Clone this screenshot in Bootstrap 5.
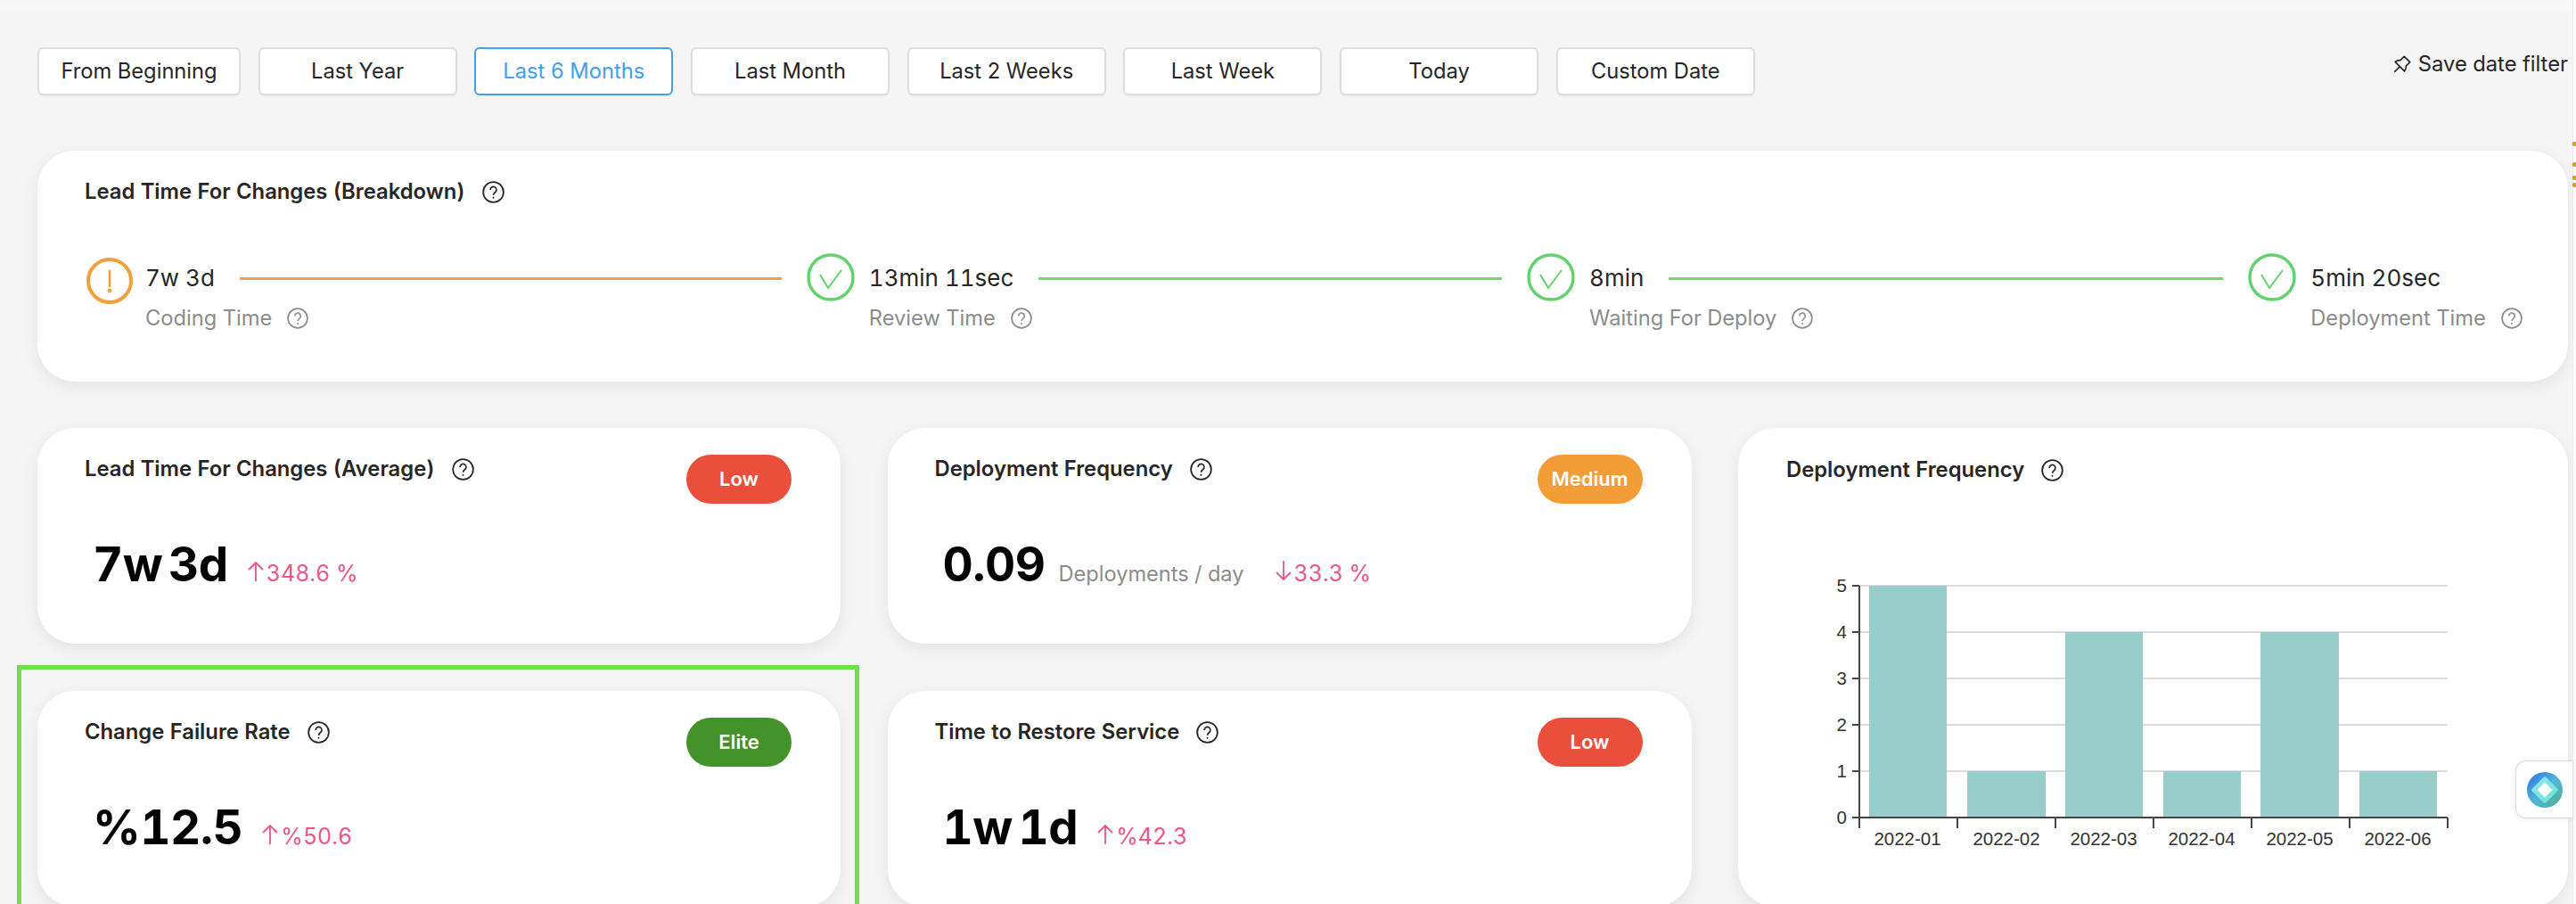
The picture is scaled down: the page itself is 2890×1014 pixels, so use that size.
<!DOCTYPE html>
<html lang="en">
<head>
  <meta charset="UTF-8">
  <meta name="viewport" content="width=device-width, initial-scale=1">
  <title>DORA Metrics</title>

  <link href="https://cdn.jsdelivr.net/npm/bootstrap@5.3.3/dist/css/bootstrap.min.css" rel="stylesheet">

  <style>
    html, body { height: 100%; overflow: hidden; }
    body {
      background: #f5f5f5;
      color: #262626;
      font-family: Inter, "Liberation Sans", sans-serif;
      font-size: 24px;
      font-variant-numeric: tabular-nums;
    }
    .page-wrap { padding: 41px 9px 0 42px; border-top: 12px solid #f7f7f7; }

    /* date filter */
    .date-bar { margin-bottom: 62px; }
    .date-btn {
      width: 223.2px;
      height: 54px;
      padding: 0;
      background: #fff;
      border: 2px solid #dedede;
      border-radius: 6px;
      color: #262626;
      font-size: 23.7px;
      box-shadow: 0 1px 2px rgba(0,0,0,.04);
    }
    .date-btn.first-btn { width: 228px; }
    .date-btn.is-on { border-color: #40a0f5; color: #40a0f5; }
    .date-list { gap: 19.5px; }
    .save-filter { margin-top: 4px; line-height: 30px; font-size: 23.8px; gap: 7px; }
    .save-filter svg { width: 22px; height: 24px; }

    /* cards */
    .panel-card {
      background: #fff;
      border: 0;
      border-radius: 42px;
      box-shadow: 0 5px 18px rgba(0,0,0,.08);
    }
    .panel-title { font-size: 23.8px; font-weight: 600; line-height: 32px; gap: 19px; }
    .help-ic { width: 25px; height: 25px; flex: none; }
    .sub-text .help-ic { width: 24px; height: 24px; }

    /* breakdown */
    .breakdown { height: 259px; padding: 30px 143px 0 53px; }
    .step-row { margin-top: 53px; }
    .step-ic { width: 54px; height: 54px; flex: none; margin-right: 16px; }
    .step-ic.warn { height: 60px; margin: 0 13px 0 1px; }
    .step-val { font-size: 26px; line-height: 36px; margin-top: 10px; white-space: nowrap; }
    .sub-text {
      width: 0;
      margin-top: 11px;
      font-size: 23.7px;
      line-height: 32px;
      color: #8c8c8c;
      white-space: nowrap;
      gap: 17px;
    }
    .seg { height: 3px; margin: 27px 28px 0; flex-basis: 0; }
    .seg-orange { background: #f2a04a; }
    .seg-green { background: #6fd877; }
    .seg-a { flex-grow: 607; }
    .seg-b { flex-grow: 519; }
    .seg-c { flex-grow: 621; }

    /* metric cards */
    .metric-grid {
      display: grid;
      grid-template-columns: 901fr 902fr 931fr;
      grid-template-rows: 242px 242px;
      column-gap: 52.5px;
      row-gap: 53px;
      margin-top: 52px;
    }
    .metric-body { padding: 30px 55px 0 53px; }
    .level-pill {
      width: 118px;
      height: 55px;
      border-radius: 28px;
      font-size: 22px;
      font-weight: 600;
      line-height: 55px;
      padding: 0;
    }
    .level-low { background: #e94f3b; }
    .level-mid { background: #f29d38; }
    .level-elite { background: #43922a; }
    .metric-row { margin-top: 38px; padding-left: 9px; }
    .big-num {
      font-size: 53px;
      font-weight: 700;
      line-height: 60px;
      letter-spacing: -.5px;
      word-spacing: -7px;
      color: #000;
    }
    .unit-text { margin-left: 15px; font-size: 23.6px; color: #8c8c8c; }
    .trend { margin-left: 21px; font-size: 25px; color: #ee5589; gap: 2px; }
    .unit-text + .trend { margin-left: 34px; }
    .trend svg { width: 20px; height: 23px; }

    .chart-card { grid-column: 3; grid-row: 1 / span 2; padding: 31px 0 0 54px; }
    .chart-svg { display: block; width: 720px; height: 330px; margin-top: 98px; margin-left: 36px; }
    .chart-svg text { font-family: "Liberation Sans", Arial, sans-serif; font-size: 20.5px; fill: #333; }

    /* things lying over the page */
    .picked-box {
      position: absolute;
      inset: -29px -21px -60px -23px;
      border: 5px solid #6fe04a;
      pointer-events: none;
    }
    .side-strip {
      position: fixed;
      top: 0;
      right: 0;
      bottom: 0;
      width: 4px;
      background: #fafafa;
      border-left: 1px solid #eee;
    }
    .side-strip i {
      position: absolute;
      right: 0;
      width: 3px;
      height: 3px;
      background: #e8a200;
      box-shadow: 0 0 0 .5px #7a5a00;
    }
    .tick-a { top: 160px; }
    .tick-b { top: 183px; }
    .tick-c { top: 198px; }
    .tick-d { top: 206px; }
    .side-widget {
      position: fixed;
      top: 853px;
      right: 4px;
      width: 64px;
      height: 65px;
      background: #fff;
      border: 1px solid #d9d9d9;
      border-right: 0;
      border-radius: 12px 0 0 12px;
      box-shadow: 0 1px 6px rgba(0,0,0,.08);
    }
    .side-widget svg { width: 40px; height: 40px; }
  </style>
</head>

<body>

<!-- icons -->
<svg width="0" height="0" class="position-absolute">
  <symbol id="ic-help" viewBox="0 0 24 24">
    <circle cx="12" cy="12" r="10.9" fill="none" stroke="currentColor" stroke-width="1.7"/>
    <path d="M8.7 9.5a3.3 3.3 0 1 1 5.2 2.7c-1.3.9-1.9 1.5-1.9 2.9" fill="none" stroke="currentColor" stroke-width="1.6"/>
    <circle cx="12" cy="18" r="1" fill="currentColor"/>
  </symbol>
  <symbol id="ic-check" viewBox="0 0 54 54">
    <circle cx="27" cy="27" r="25" fill="none" stroke="#62d36c" stroke-width="3.4"/>
    <path d="M15 24l9 15L39 19" fill="none" stroke="#62d36c" stroke-width="2"/>
  </symbol>
  <symbol id="ic-up" viewBox="0 0 20 23">
    <path d="M10 23V2M2 10l8-8 8 8" fill="none" stroke="currentColor" stroke-width="1.8"/>
  </symbol>
  <symbol id="ic-down" viewBox="0 0 20 23">
    <path d="M10 0v21M2 13l8 8 8-8" fill="none" stroke="currentColor" stroke-width="1.8"/>
  </symbol>
</svg>

<div class="page-wrap">

  <!-- Date filter -->
  <div class="date-bar d-flex justify-content-between align-items-start">
    <div class="date-list d-flex">
      <button type="button" class="btn date-btn first-btn">From Beginning</button>
      <button type="button" class="btn date-btn">Last Year</button>
      <button type="button" class="btn date-btn is-on">Last 6 Months</button>
      <button type="button" class="btn date-btn">Last Month</button>
      <button type="button" class="btn date-btn">Last 2 Weeks</button>
      <button type="button" class="btn date-btn">Last Week</button>
      <button type="button" class="btn date-btn">Today</button>
      <button type="button" class="btn date-btn">Custom Date</button>
    </div>
    <div class="save-filter d-flex align-items-center">
      <svg viewBox="0 0 24 24"><path d="M14.5 2.5l7 7-4.8 4.8c.3 2.3-.3 4.5-1.9 6.3L3.4 9.2c1.8-1.6 4-2.2 6.3-1.9zM9 15l-6.5 6.5" fill="none" stroke="#262626" stroke-width="1.8" stroke-linejoin="round"/></svg>
      <span>Save date filter</span>
    </div>
  </div>

  <!-- Breakdown -->
  <div class="card panel-card breakdown">
    <div class="panel-title d-flex align-items-center">
      <span>Lead Time For Changes (Breakdown)</span>
      <svg class="help-ic"><use href="#ic-help"/></svg>
    </div>
    <div class="step-row d-flex align-items-start">
      <svg class="step-ic warn" viewBox="0 0 54 60">
        <circle cx="27" cy="31" r="24" fill="none" stroke="#f2a03d" stroke-width="4"/>
        <path d="M27 20v17" stroke="#f2a03d" stroke-width="2.6" stroke-linecap="round"/>
        <circle cx="27" cy="42" r="2.4" fill="#f2a03d"/>
      </svg>
      <div>
        <div class="step-val">7w 3d</div>
        <div class="sub-text d-flex align-items-center"><span>Coding Time</span><svg class="help-ic"><use href="#ic-help"/></svg></div>
      </div>
      <div class="seg seg-orange seg-a"></div>

      <svg class="step-ic"><use href="#ic-check"/></svg>
      <div>
        <div class="step-val">13min 11sec</div>
        <div class="sub-text d-flex align-items-center"><span>Review Time</span><svg class="help-ic"><use href="#ic-help"/></svg></div>
      </div>
      <div class="seg seg-green seg-b"></div>

      <svg class="step-ic"><use href="#ic-check"/></svg>
      <div>
        <div class="step-val">8min</div>
        <div class="sub-text d-flex align-items-center"><span>Waiting For Deploy</span><svg class="help-ic"><use href="#ic-help"/></svg></div>
      </div>
      <div class="seg seg-green seg-c"></div>

      <svg class="step-ic"><use href="#ic-check"/></svg>
      <div>
        <div class="step-val">5min 20sec</div>
        <div class="sub-text d-flex align-items-center"><span>Deployment Time</span><svg class="help-ic"><use href="#ic-help"/></svg></div>
      </div>
    </div>
  </div>

  <!-- Metrics -->
  <div class="metric-grid">

    <div class="card panel-card metric-body">
      <div class="d-flex justify-content-between align-items-start">
        <div class="panel-title d-flex align-items-center">
          <span>Lead Time For Changes (Average)</span>
          <svg class="help-ic"><use href="#ic-help"/></svg>
        </div>
        <span class="badge level-pill level-low">Low</span>
      </div>
      <div class="metric-row d-flex align-items-baseline">
        <span class="big-num">7w 3d</span>
        <span class="trend d-flex align-items-baseline"><svg><use href="#ic-up"/></svg>348.6 %</span>
      </div>
    </div>

    <div class="card panel-card metric-body">
      <div class="d-flex justify-content-between align-items-start">
        <div class="panel-title d-flex align-items-center">
          <span>Deployment Frequency</span>
          <svg class="help-ic"><use href="#ic-help"/></svg>
        </div>
        <span class="badge level-pill level-mid">Medium</span>
      </div>
      <div class="metric-row d-flex align-items-baseline">
        <span class="big-num">0.09</span>
        <span class="unit-text">Deployments / day</span>
        <span class="trend d-flex align-items-baseline"><svg><use href="#ic-down"/></svg>33.3 %</span>
      </div>
    </div>

    <div class="card panel-card chart-card">
      <div class="panel-title d-flex align-items-center">
        <span>Deployment Frequency</span>
        <svg class="help-ic"><use href="#ic-help"/></svg>
      </div>
      <svg class="chart-svg" viewBox="0 0 720 330">
        <!-- x = page x - 2040, y = page y - 640 -->
        <g stroke="#dcdcdc" stroke-width="2">
          <path d="M46 16H706M46 68H706M46 120H706M46 172H706M46 224H706"/>
        </g>
        <g fill="#99cdc9">
          <rect x="57" y="16" width="87" height="260"/>
          <rect x="167" y="224" width="88" height="52"/>
          <rect x="277" y="68" width="87" height="208"/>
          <rect x="387" y="224" width="87" height="52"/>
          <rect x="496" y="68" width="88" height="208"/>
          <rect x="607" y="224" width="87" height="52"/>
        </g>
        <g stroke="#444" stroke-width="2" fill="none">
          <path d="M46 16V288M46 276H706"/>
          <path d="M38 16h8M38 68h8M38 120h8M38 172h8M38 224h8M38 276h8"/>
          <path d="M156 276v12M266 276v12M376 276v12M486 276v12M596 276v12M706 276v12"/>
        </g>
        <g text-anchor="end">
          <text x="32" y="23">5</text>
          <text x="32" y="75">4</text>
          <text x="32" y="127">3</text>
          <text x="32" y="179">2</text>
          <text x="32" y="231">1</text>
          <text x="32" y="283">0</text>
        </g>
        <g text-anchor="middle">
          <text x="100" y="307">2022-01</text>
          <text x="211" y="307">2022-02</text>
          <text x="320" y="307">2022-03</text>
          <text x="430" y="307">2022-04</text>
          <text x="540" y="307">2022-05</text>
          <text x="650" y="307">2022-06</text>
        </g>
      </svg>
    </div>

    <div class="position-relative">
      <div class="card panel-card metric-body h-100">
        <div class="d-flex justify-content-between align-items-start">
          <div class="panel-title d-flex align-items-center">
            <span>Change Failure Rate</span>
            <svg class="help-ic"><use href="#ic-help"/></svg>
          </div>
          <span class="badge level-pill level-elite">Elite</span>
        </div>
        <div class="metric-row d-flex align-items-baseline">
          <span class="big-num">%12.5</span>
          <span class="trend d-flex align-items-baseline"><svg><use href="#ic-up"/></svg>%50.6</span>
        </div>
      </div>
      <div class="picked-box"></div>
    </div>

    <div class="card panel-card metric-body">
      <div class="d-flex justify-content-between align-items-start">
        <div class="panel-title d-flex align-items-center">
          <span>Time to Restore Service</span>
          <svg class="help-ic"><use href="#ic-help"/></svg>
        </div>
        <span class="badge level-pill level-low">Low</span>
      </div>
      <div class="metric-row d-flex align-items-baseline">
        <span class="big-num">1w 1d</span>
        <span class="trend d-flex align-items-baseline"><svg><use href="#ic-up"/></svg>%42.3</span>
      </div>
    </div>

  </div>
</div>

<div class="side-strip"><i class="tick-a"></i><i class="tick-b"></i><i class="tick-c"></i><i class="tick-d"></i></div>

<div class="side-widget d-flex align-items-center justify-content-center">
  <svg viewBox="0 0 40 40">
    <defs>
      <linearGradient id="logoGrad" x1="0" y1="0" x2="1" y2="1">
        <stop offset="0" stop-color="#2d6fe6"/>
        <stop offset=".5" stop-color="#4fb6d8"/>
        <stop offset="1" stop-color="#4fae8e"/>
      </linearGradient>
      <linearGradient id="logoInner" x1="0" y1="0" x2="1" y2="1">
        <stop offset="0" stop-color="#8fe4f5"/>
        <stop offset="1" stop-color="#6fe6cc"/>
      </linearGradient>
    </defs>
    <circle cx="20" cy="20" r="20" fill="url(#logoGrad)"/>
    <path d="M20 6.5L33.5 20 20 33.5 6.5 20z" fill="url(#logoInner)" stroke="url(#logoInner)" stroke-width="3" stroke-linejoin="round"/>
    <path d="M20 11.5L28.5 20 20 28.5 11.5 20z" fill="#fff"/>
  </svg>
</div>

<script src="https://cdn.jsdelivr.net/npm/bootstrap@5.3.3/dist/js/bootstrap.bundle.min.js"></script>
</body>
</html>
